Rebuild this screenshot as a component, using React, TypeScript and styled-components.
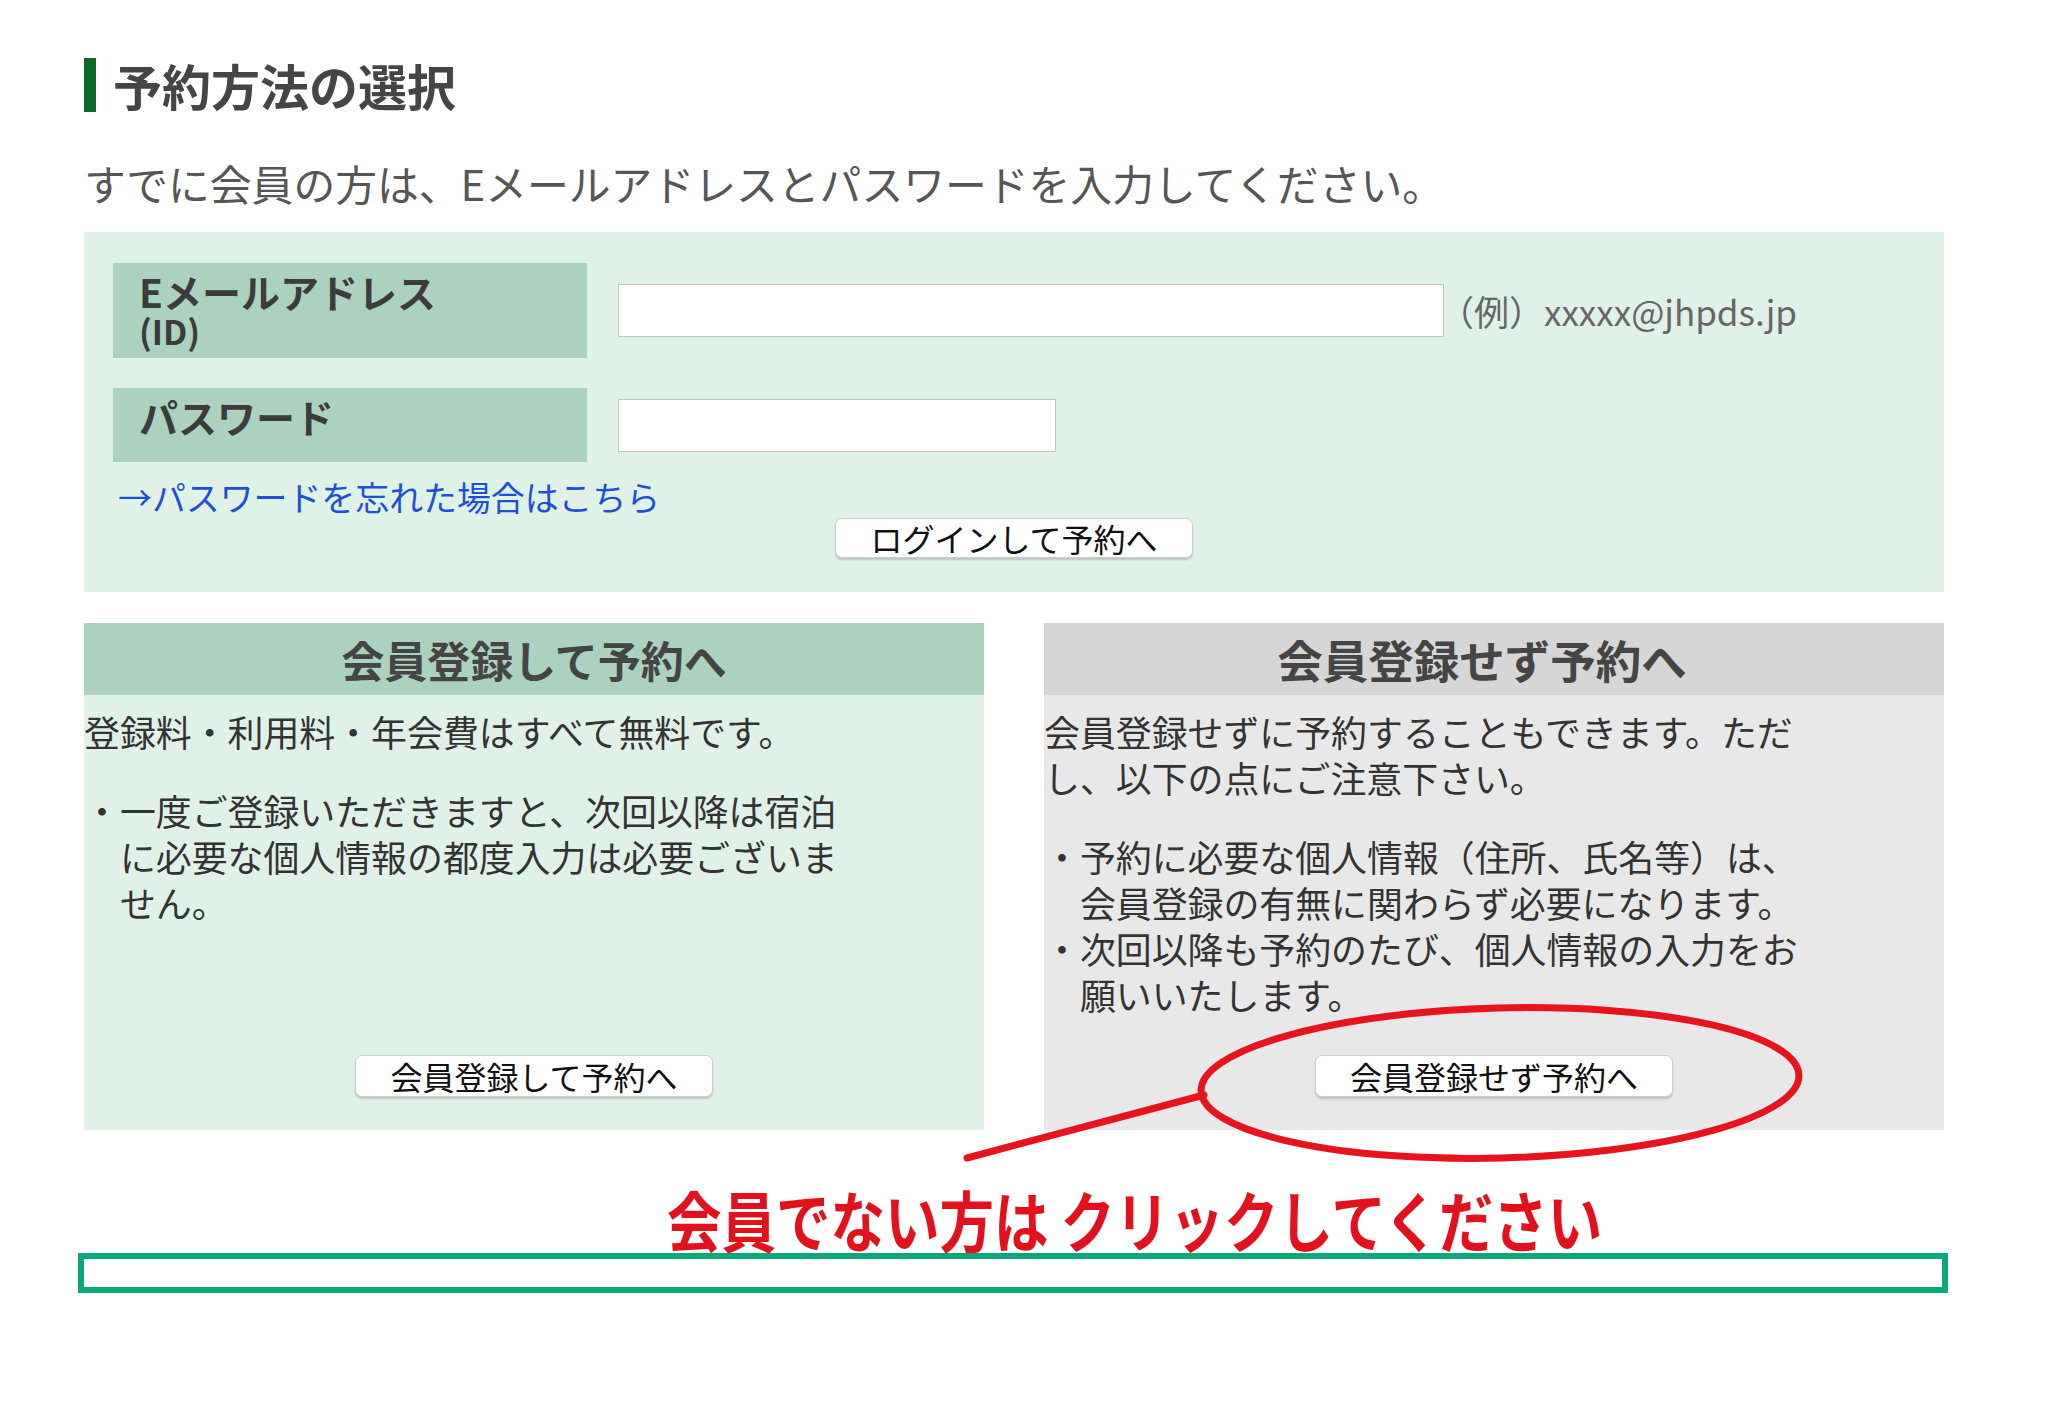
import styled, { createGlobalStyle } from "styled-components";

const GlobalStyle = createGlobalStyle`
  html, body {
    margin: 0;
    padding: 0;
    background: #fff;
  }
  body {
    font-family: "Noto Sans CJK JP", "Noto Sans", sans-serif;
    color: #333;
  }
`;

const Page = styled.div`
  position: relative;
  width: 2072px;
  min-height: 1426px;
  box-sizing: border-box;
  padding: 58px 128px 0 84px;
`;

const Heading = styled.h2`
  display: flex;
  align-items: center;
  gap: 17px;
  margin: 0;
  font-size: 49px;
  line-height: 54px;
  font-weight: 700;
  color: #454545;
`;

const HeadingBar = styled.span`
  width: 12px;
  height: 54px;
  background: #0b6a2b;
`;

const Intro = styled.p`
  margin: 47px 0 25px;
  font-size: 41.8px;
  line-height: 48px;
  color: #565656;
`;

const LoginPanel = styled.section`
  background: #e0f2e8;
  padding: 31px 29px 34px;
`;

const FieldRow = styled.div<{ gapTop?: number }>`
  display: flex;
  align-items: center;
  gap: 31px;
  margin-top: ${({ gapTop }) => gapTop ?? 0}px;
`;

const FieldLabel = styled.div<{ minH: number }>`
  width: 474px;
  min-height: ${({ minH }) => minH}px;
  box-sizing: border-box;
  padding: 8px 26px 7px;
  background: #acd2bf;
  color: #3c3c3c;
  font-size: 39px;
  line-height: 40px;
  font-weight: 700;
`;

const LabelSub = styled.span`
  display: block;
  font-size: 34px;
`;

const TextInput = styled.input<{ w: number }>`
  width: ${({ w }) => w}px;
  height: 53px;
  box-sizing: border-box;
  border: 1px solid #c4c4c4;
  background: #fff;
  padding: 0 10px;
  font-size: 30px;
  outline: none;
`;

const Example = styled.span`
  margin-left: -36px;
  font-size: 35px;
  color: #666;
`;

const ForgotLink = styled.a`
  display: block;
  margin-top: 15px;
  padding-left: 5px;
  font-size: 33.9px;
  line-height: 40px;
  color: #1f4fd6;
  text-decoration: none;
`;

const ButtonRow = styled.div<{ gapTop?: number }>`
  display: flex;
  justify-content: center;
  margin-top: ${({ gapTop }) => gapTop ?? 0}px;
`;

const PlainButton = styled.button<{ h: number }>`
  height: ${({ h }) => h}px;
  padding: 0 34px;
  border: 1px solid #cdcdcd;
  border-radius: 7px;
  background: #fff;
  box-shadow: 0 2px 2px rgba(0, 0, 0, 0.18);
  font-family: "Noto Sans CJK JP", "Noto Sans", sans-serif;
  font-size: 32px;
  line-height: 36px;
  color: #111;
  cursor: pointer;
`;

const Cards = styled.div`
  display: grid;
  grid-template-columns: 900px 900px;
  gap: 60px;
  margin-top: 31px;
`;

const Card = styled.section<{ tone: "green" | "gray" }>`
  display: flex;
  flex-direction: column;
  height: 507px;
  background: ${({ tone }) => (tone === "green" ? "#e0f2e8" : "#e8e8e8")};
`;

const CardHeader = styled.h3<{ tone: "green" | "gray"; size: number; shift?: number }>`
  margin: 0;
  height: 72px;
  box-sizing: border-box;
  padding-right: ${({ shift }) => shift ?? 0}px;
  display: flex;
  align-items: center;
  justify-content: center;
  background: ${({ tone }) => (tone === "green" ? "#acd2bf" : "#d6d6d6")};
  color: #454545;
  font-size: ${({ size }) => size}px;
  font-weight: 700;
`;

const CardBody = styled.div`
  flex: 1;
  display: flex;
  flex-direction: column;
  padding-top: 13px;
  font-size: 35.9px;
  line-height: 46px;
  color: #333;
`;

const Para = styled.p`
  width: 21.6em;
  margin: 0 0 33px;
`;

const Bullets = styled.ul`
  width: 21.6em;
  margin: 0;
  padding: 0;
  list-style: none;
`;

const Bullet = styled.li`
  padding-left: 1em;
  text-indent: -1em;
`;

const CardFoot = styled(ButtonRow)`
  margin-top: auto;
  margin-bottom: 33px;
`;

const Callout = styled.p`
  margin: 59px 0 0;
  padding-left: 583px;
  font-size: 54.5px;
  line-height: 60px;
  font-weight: 700;
  color: #e3111b;
  transform: scaleY(1.2);
  transform-origin: center;
`;

const CalloutLead = styled.span`
  margin-right: 12px;
`;

const OutlineBox = styled.div`
  height: 40px;
  box-sizing: border-box;
  margin: 4px -4px 0 -6px;
  border: 6px solid #0ca879;
`;

const Overlay = styled.svg`
  position: absolute;
  left: 0;
  top: 0;
  pointer-events: none;
`;

export default function App() {
  return (
    <Page>
      <GlobalStyle />
      <Heading>
        <HeadingBar />
        予約方法の選択
      </Heading>
      <Intro>すでに会員の方は、Eメールアドレスとパスワードを入力してください。</Intro>

      <LoginPanel>
        <FieldRow>
          <FieldLabel minH={95}>
            Eメールアドレス
            <LabelSub>(ID)</LabelSub>
          </FieldLabel>
          <TextInput w={826} type="text" />
          <Example>（例）xxxxx@jhpds.jp</Example>
        </FieldRow>
        <FieldRow gapTop={30}>
          <FieldLabel minH={74}>パスワード</FieldLabel>
          <TextInput w={438} type="password" />
        </FieldRow>
        <ForgotLink href="#">→パスワードを忘れた場合はこちら</ForgotLink>
        <ButtonRow gapTop={1}>
          <PlainButton h={40}>ログインして予約へ</PlainButton>
        </ButtonRow>
      </LoginPanel>

      <Cards>
        <Card tone="green">
          <CardHeader tone="green" size={43}>会員登録して予約へ</CardHeader>
          <CardBody>
            <Para>登録料・利用料・年会費はすべて無料です。</Para>
            <Bullets>
              <Bullet>・一度ご登録いただきますと、次回以降は宿泊に必要な個人情報の都度入力は必要ございません。</Bullet>
            </Bullets>
            <CardFoot>
              <PlainButton h={42}>会員登録して予約へ</PlainButton>
            </CardFoot>
          </CardBody>
        </Card>
        <Card tone="gray">
          <CardHeader tone="gray" size={45.5} shift={24}>会員登録せず予約へ</CardHeader>
          <CardBody>
            <Para>会員登録せずに予約することもできます。ただし、以下の点にご注意下さい。</Para>
            <Bullets>
              <Bullet>・予約に必要な個人情報（住所、氏名等）は、会員登録の有無に関わらず必要になります。</Bullet>
              <Bullet>・次回以降も予約のたび、個人情報の入力をお願いいたします。</Bullet>
            </Bullets>
            <CardFoot>
              <PlainButton h={42}>会員登録せず予約へ</PlainButton>
            </CardFoot>
          </CardBody>
        </Card>
      </Cards>

      <Callout>
        <CalloutLead>会員でない方は</CalloutLead>クリックしてください
      </Callout>
      <OutlineBox />

      <Overlay width={2072} height={1426} viewBox="0 0 2072 1426">
        <ellipse
          cx={1500}
          cy={1083}
          rx={299}
          ry={75}
          transform="rotate(-1.5 1500 1083)"
          fill="none"
          stroke="#e8141c"
          strokeWidth={7}
        />
        <line x1={967} y1={1158} x2={1204} y2={1095} stroke="#e8141c" strokeWidth={7} strokeLinecap="round" />
      </Overlay>
    </Page>
  );
}
